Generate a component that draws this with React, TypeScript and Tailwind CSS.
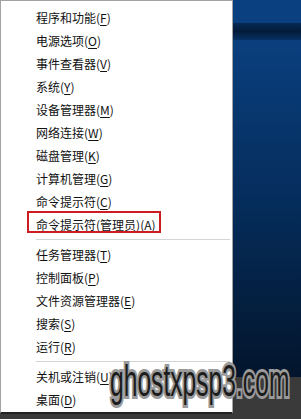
import React from 'react';

type Item = { label: string; key: string; boxed?: boolean; submenu?: boolean };

const GROUPS: Item[][] = [
  [
    { label: '程序和功能', key: 'F' },
    { label: '电源选项', key: 'O' },
    { label: '事件查看器', key: 'V' },
    { label: '系统', key: 'Y' },
    { label: '设备管理器', key: 'M' },
    { label: '网络连接', key: 'W' },
    { label: '磁盘管理', key: 'K' },
    { label: '计算机管理', key: 'G' },
    { label: '命令提示符', key: 'C' },
    { label: '命令提示符(管理员)', key: 'A', boxed: true },
  ],
  [
    { label: '任务管理器', key: 'T' },
    { label: '控制面板', key: 'P' },
    { label: '文件资源管理器', key: 'E' },
    { label: '搜索', key: 'S' },
    { label: '运行', key: 'R' },
  ],
  [
    { label: '关机或注销', key: 'U', submenu: true },
    { label: '桌面', key: 'D' },
  ],
];

function MenuRow({ item }: { item: Item }) {
  return (
    <div className="relative flex h-[23px] items-center pl-[35px] text-[12px] leading-none text-[#111]">
      {item.boxed && (
        <span className="absolute left-[26px] top-[-2px] h-[22px] w-[134px] border-2 border-[#cc1d23]" />
      )}
      <span>
        {item.label}(<span className="underline underline-offset-2">{item.key}</span>)
      </span>
      {item.submenu && (
        <svg className="absolute left-[212px] top-[3px]" width="8" height="12" viewBox="0 0 8 12">
          <path d="M1.5 1.5 L6 6 L1.5 10.5" fill="none" stroke="#333" strokeWidth="1" />
        </svg>
      )}
    </div>
  );
}

export default function App() {
  return (
    <div
      className="relative flex h-[419px] w-[301px] overflow-hidden bg-[#3a3a3a]"
      style={{ fontFamily: '"Noto Sans CJK SC", "Noto Sans", sans-serif' }}
    >
      <div className="flex h-[414px] w-[233px] shrink-0 flex-col border-x border-t border-b-2 border-x-[#a3a3a3] border-t-[#a3a3a3] border-b-[#222] bg-white pt-[5px]">
        {GROUPS.map((group, gi) => (
          <div key={gi}>
            {gi > 0 && (
              <div className="py-[3px] pl-[35px] pr-[2px]">
                <div className="h-px bg-[#d4d4d4]" />
              </div>
            )}
            {group.map((item) => (
              <MenuRow key={item.key} item={item} />
            ))}
          </div>
        ))}
      </div>

      <div className="flex flex-1 flex-col">
        <div className="h-[23px] bg-[#0b4080]" />
        <div className="h-[17px] bg-gradient-to-b from-[#062a55] via-[#031b38] to-[#073265]" />
        <div className="flex-1 bg-gradient-to-b from-[#0a3f7e] via-[#052c5a] to-[#03152c]" />
        <div className="h-[42px] bg-[#3a3a3a]" />
      </div>

      <div className="pointer-events-none absolute left-[110px] top-[359px] whitespace-nowrap text-[44px] leading-none text-[#1c1c1c] [transform-origin:left_top] [transform:scaleX(0.56)] [font-family:'Liberation_Sans',sans-serif] [paint-order:stroke_fill] [-webkit-text-stroke:6px_#9a9a9a]">
        ghostxpsp3.com
      </div>
    </div>
  );
}
